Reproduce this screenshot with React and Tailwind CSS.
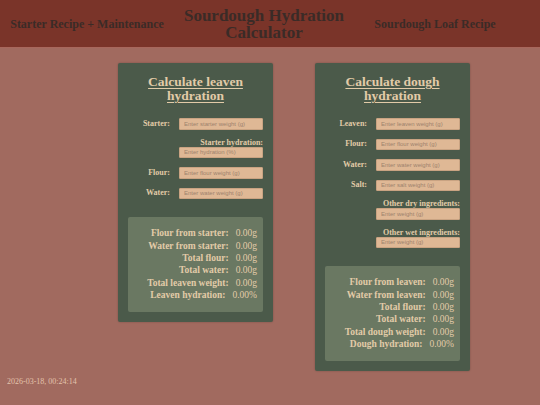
import React from 'react';

const serif = "font-['Liberation_Serif',serif]";

const inputCls =
  "h-[11.5px] w-[84px] rounded-[1px] border border-[#c9a382] bg-[#dfb895] px-[4px] font-['Liberation_Sans',sans-serif] text-[6px] text-[#4a3a30] outline-none placeholder:text-[#9c826d]";

const Field = ({ label, placeholder }) => (
  <div className="flex items-center justify-end">
    <label className="mr-[9px] text-[8px] font-bold leading-[8px]">{label}</label>
    <input placeholder={placeholder} className={inputCls} />
  </div>
);

const StackedField = ({ label, placeholder }) => (
  <div className="flex flex-col items-end">
    <label className="text-[8px] font-bold leading-[8px]">{label}</label>
    <input placeholder={placeholder} className={inputCls} />
  </div>
);

const Results = ({ rows }) => (
  <div className="mt-[18px] rounded-[2px] bg-[#6a7862] py-[10px] pr-[6px] text-right text-[9.5px] leading-[12.4px]">
    {rows.map(([label, value]) => (
      <div key={label}>
        <span className="font-bold">{label}</span>
        <span className="ml-[7px]">{value}</span>
      </div>
    ))}
  </div>
);

const Card = ({ title, children, rows }) => (
  <div className="w-[155px] rounded-[2px] bg-[#4b5a4a] px-[10px] pt-[11.5px] pb-[10.5px] text-[#e2cba8] shadow-[0_0_2px_rgba(0,0,0,0.25)]">
    <h2 className="text-center text-[13.5px] font-bold leading-[14.3px] underline decoration-1 underline-offset-2">{title}</h2>
    <div className="mt-[15px] flex flex-col gap-[9px]">{children}</div>
    <Results rows={rows} />
  </div>
);

export default function App() {
  return (
    <div className={`min-h-screen bg-[#a16a5f] ${serif}`}>
      {/* header */}
      <header className="flex h-[48px] items-center border-b border-[#a8675c] bg-[#7a3429] font-bold text-[#3a2b27]">
        <div className="w-[174px] text-center text-[12px]">Starter Recipe + Maintenance</div>
        <div className="w-[180px] text-center text-[17px] leading-[17px]">Sourdough Hydration Calculator</div>
        <div className="ml-[6px] w-[150px] text-center text-[12px]">Sourdough Loaf Recipe</div>
      </header>

      <main className="flex items-start gap-[42px] pt-[15px] pl-[118px]">
        <Card
          title="Calculate leaven hydration"
          rows={[
            ['Flour from starter:', '0.00g'],
            ['Water from starter:', '0.00g'],
            ['Total flour:', '0.00g'],
            ['Total water:', '0.00g'],
            ['Total leaven weight:', '0.00g'],
            ['Leaven hydration:', '0.00%'],
          ]}
        >
          <Field label="Starter:" placeholder="Enter starter weight (g)" />
          <StackedField label="Starter hydration:" placeholder="Enter hydration (%)" />
          <Field label="Flour:" placeholder="Enter flour weight (g)" />
          <Field label="Water:" placeholder="Enter water weight (g)" />
        </Card>

        <Card
          title="Calculate dough hydration"
          rows={[
            ['Flour from leaven:', '0.00g'],
            ['Water from leaven:', '0.00g'],
            ['Total flour:', '0.00g'],
            ['Total water:', '0.00g'],
            ['Total dough weight:', '0.00g'],
            ['Dough hydration:', '0.00%'],
          ]}
        >
          <Field label="Leaven:" placeholder="Enter leaven weight (g)" />
          <Field label="Flour:" placeholder="Enter flour weight (g)" />
          <Field label="Water:" placeholder="Enter water weight (g)" />
          <Field label="Salt:" placeholder="Enter salt weight (g)" />
          <StackedField label="Other dry ingredients:" placeholder="Enter weight (g)" />
          <StackedField label="Other wet ingredients:" placeholder="Enter weight (g)" />
        </Card>
      </main>

      <div className="mt-[6px] pl-[7px] text-[8px] leading-[10px] text-[#e3c3ac]">2026-03-18, 00:24:14</div>
    </div>
  );
}
